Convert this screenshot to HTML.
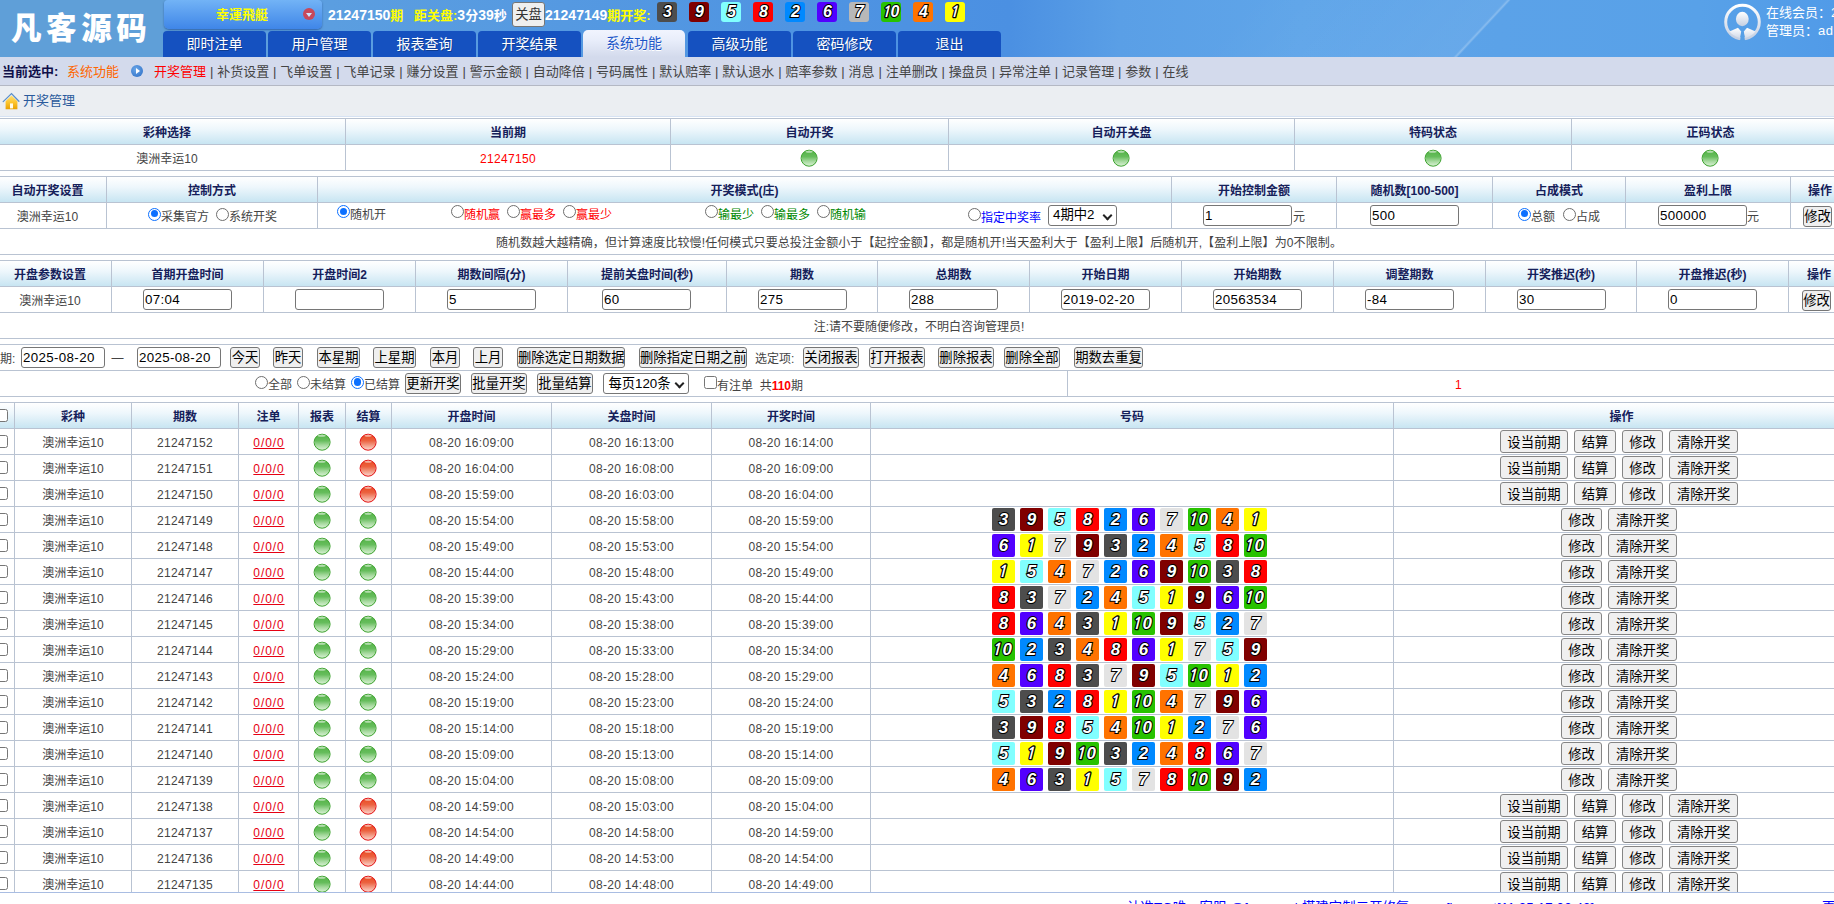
<!DOCTYPE html><html lang="zh"><head><meta charset="utf-8"><title>开奖管理</title><style>
*{box-sizing:border-box}
html,body{margin:0;padding:0}
body{width:1834px;height:904px;overflow:hidden;position:relative;background:#fff;
 font-family:"Liberation Sans","Noto Sans CJK SC",sans-serif;font-size:12px;color:#333;}
#hd{position:absolute;left:0;top:0;width:1834px;height:57px;overflow:hidden;
 background:linear-gradient(90deg,#5f9fd8 0,#5f9fd8 160px,#5b9ee0 330px,#4f94e2 800px,#4b90e2 1010px,#5a9fe6 1120px,#5fa5e9 1300px,#5ba2e8 1500px,#58a1e8 1700px,#519be8 1834px);}
#hd .streak{position:absolute;left:1214px;top:-40px;width:260px;height:160px;transform:skewX(-43deg);
 background:linear-gradient(90deg,rgba(255,255,255,0) 0,rgba(255,255,255,.07) 98%,rgba(255,255,255,.28) 99%,rgba(255,255,255,0) 100%);}
#logo{position:absolute;left:11px;top:6px;font-size:30.5px;line-height:44px;font-weight:900;color:#fff;letter-spacing:4.6px;white-space:nowrap}
#game{position:absolute;left:164px;top:0;width:158px;height:29px;border-radius:4px 4px 5px 5px;
 background:linear-gradient(#72b3f6,#3f86e8);box-shadow:0 1px 2px rgba(0,40,120,.5);color:#ffff00;font-weight:bold;font-size:13px;line-height:29px}
#game span{position:absolute;left:52px;top:0;white-space:nowrap}
#game i{position:absolute;left:139px;top:8px;width:12px;height:12px;border-radius:50%;background:#c8485a}
#game i:after{content:"";position:absolute;left:3px;top:4.5px;border:3px solid transparent;border-top:4px solid #cfe4ff;border-bottom:0}
.inf{position:absolute;top:1px;height:29px;line-height:28px;font-size:13px;font-weight:bold;color:#fff;white-space:nowrap}
.inf .dg{font-size:14px}
.inf .y{color:#ffff00}
#gp{position:absolute;left:512px;top:2px;font-family:inherit;font-weight:normal;font-size:13.33px;padding:0 0 1px 0;height:24.5px;width:33px;margin:0;border:1px solid #767676;border-radius:3px;background:#efefef;color:#333}
.n10 .k{left:-4px}
.hb .k{font-size:15.3px}
.hb{position:absolute;top:2px;width:20px;height:20px;border-radius:3px;text-align:center;line-height:20px;font:italic bold 16px/20px "Liberation Sans",sans-serif;color:#fff;
 -webkit-text-stroke:2px #000;paint-order:stroke fill;letter-spacing:-1px}
.tab{position:absolute;top:31px;width:103px;height:26px;border-radius:4px 4px 0 0;background:#1551c0;color:#fff;font-size:14px;line-height:26px;text-align:center;text-shadow:1px 1px 0 rgba(0,0,0,.25)}
.tab.on{top:30px;height:27px;width:102px;background:linear-gradient(#f1f4fe 0,#e8edfa 40%,#d3daec 100%);color:#1a55c8;line-height:27px;text-shadow:0 1px 0 #fff;border-radius:5px 5px 0 0}
#user{position:absolute;left:1766px;top:4px;color:#fff;font-size:13px;line-height:18px;white-space:nowrap}
#sub{position:absolute;left:0;top:57px;width:1834px;height:29px;background:#d3daec;border-bottom:1px solid #b4b8c4;line-height:27px;font-size:13px;color:#444;white-space:nowrap}
#sub b{color:#10104a;position:absolute;left:2px;top:1px}
#sub .o{color:#ff6600;position:absolute;left:67px;top:1px}
#sub .r{color:#f00}
#sub .lk{position:absolute;left:154px;word-spacing:0.27px;top:1px}
#sub .pl{position:absolute;left:131px;top:8px;width:12px;height:12px;border-radius:50%;background:radial-gradient(circle at 40% 35%,#6aa6e8,#2a6cc4)}
#sub .pl:after{content:"";position:absolute;left:4.5px;top:3px;border:3px solid transparent;border-left:4px solid #fff;border-right:0}
#ttl{position:absolute;left:0;top:86px;width:1834px;height:31px;background:#ebeef2;border-bottom:1px solid #d6e2f3;font-size:13px;color:#2a5a9c;line-height:30px}
#ttl span{position:absolute;left:23px}
table{border-collapse:separate;border-spacing:0;table-layout:fixed;position:absolute;border-top:1px solid #b9c3d2;border-left:1px solid #b9c3d2}
td,th{border-right:1px solid #b9c3d2;border-bottom:1px solid #b9c3d2;height:26px;padding:3px 0 0 0;text-align:center;font-size:12px;font-weight:normal;white-space:nowrap;overflow:hidden;color:#444;vertical-align:top;line-height:22px}
th{font-weight:bold;color:#15205a;background:linear-gradient(#ffffff 0,#eef7fc 40%,#c8e5f2 100%)}
input.t{display:block;font-family:inherit;font-size:13.33px;width:89px;height:21px;border:1px solid #767676;border-radius:3px;padding:0 0 0 1px;margin:0;color:#000;background:#fff;letter-spacing:.35px}
button.b{display:block;font-family:inherit;font-size:13.33px;height:20.6px;border:1px solid #767676;border-radius:3px;background:#efefef;color:#000;padding:1px 0 0 0;margin:0;vertical-align:middle;line-height:17px}
button.c{font-family:inherit;font-size:13.33px;height:22.7px;border:1px solid #858585;border-radius:3px;background:#f0f0f0;color:#000;padding:1.5px 0 0 0;margin:0 6px 0 0;vertical-align:middle;line-height:19px;position:relative;top:0.4px;left:-0.5px}
button.c:last-child{margin-right:3.8px}
.a{position:absolute;white-space:nowrap;line-height:16px;font-size:12px;color:#444}
.a.tx{line-height:18px}
.rg .lb{position:absolute;left:13px;top:0.5px;line-height:18px}
.rg .rd,.rg .ck{position:absolute;left:0;top:0}
td.m,th.m{padding:0;line-height:25px;vertical-align:middle;font-size:0}
td.d{letter-spacing:.3px}
button.sd{width:68px}button.js{width:42px}button.xg{width:41px}button.qc{width:69.2px}
.rd{display:inline-block;width:13px;height:13px;border-radius:50%;border:1.2px solid #6e6e6e;background:#fff;vertical-align:middle;position:relative}
.rd.on{border:1.3px solid #0c70ff}
.rd.on:after{content:"";position:absolute;left:1.5px;top:1.5px;width:7.4px;height:7.4px;border-radius:50%;background:#0c70ff}
.ck{display:inline-block;width:13px;height:13px;border-radius:2.5px;border:1px solid #767676;background:#fff;vertical-align:middle;position:relative;top:.5px}
.sel{display:block;height:21px;border:1px solid #767676;border-radius:3px;background:#fff;color:#000;font-size:13.33px;line-height:19px;text-align:left;padding-left:4px;vertical-align:middle;position:relative}
.sel:after{content:"";position:absolute;right:5px;top:6px;width:5px;height:5px;border-right:2px solid #222;border-bottom:2px solid #222;transform:rotate(45deg)}
.g,.r2{display:inline-block;width:17px;height:17px;border-radius:50%;vertical-align:middle;position:relative;transform:translate(-0.4px,0.7px)}
.g{background:linear-gradient(#55b348 0,#66bd5c 40%,#a5d99d 70%,#d6f0d1 100%);border:1.6px solid #3aa22b}
.r2{background:linear-gradient(#e84a22 0,#ec6240 40%,#f39a84 70%,#fbd3c9 100%);border:1.6px solid #e30d0d}
.g:after,.r2:after{content:"";position:absolute;left:3.5px;top:0.3px;width:7.5px;height:2px;border-radius:50%;background:rgba(255,255,255,.55)}
.n{display:inline-block;width:23px;height:23px;margin-right:5px;border-radius:2px;text-align:center;font:italic bold 17px/23px "Liberation Sans",sans-serif;color:#fff;vertical-align:middle;letter-spacing:-1px;text-indent:-1px;position:relative;top:.5px;
 -webkit-text-stroke:2px #000;paint-order:stroke fill}
.k{font-family:"NanumGothic","Liberation Sans",sans-serif;font-weight:bold;font-size:16.3px;-webkit-text-stroke:2.6px #000;position:relative;left:-2.4px;margin-right:-1.6px}
.n1{background:#ffff00}.n2{background:#0089ff}.n3{background:#4d4d4d}.n4{background:#ff7300}.n5{background:#81ffff}
.n6{background:#5200ff}.n7{background:#e3e3e3}.n8{background:#ff0000}.n9{background:#800000}.n10{background:#28c200}
a.u{color:#e60012;text-decoration:underline;letter-spacing:.9px;margin-left:.9px}
.red{color:#f00}.grn{color:#080}.blu{color:#00f}
#ft{position:absolute;left:0;top:892px;width:1834px;height:12px;background:#fff;border-top:1px solid #a9bde2;overflow:hidden}
#ft span{position:absolute;top:7px;font-size:13.33px;letter-spacing:.12px;color:#0000ff;white-space:nowrap;line-height:16px}
</style></head><body>
<div id="hd"><div class="streak"></div>
<div id="logo">凡客源码</div>
<div id="game"><span>幸運飛艇</span><i></i></div>
<div class="inf" style="left:328px"><span class="dg">21247150</span><span class="y">期</span></div>
<div class="inf" style="left:414px"><span class="y">距关盘:</span><span class="dg">3</span>分<span class="dg">39</span>秒</div>
<button id="gp">关盘</button>
<div class="inf" style="left:545px"><span class="dg">21247149</span><span class="y">期开奖:</span></div>
<div class="hb" style="left:657px;background:#4d4d4d">3</div>
<div class="hb" style="left:689px;background:#800000">9</div>
<div class="hb" style="left:721px;background:#81ffff">5</div>
<div class="hb" style="left:753px;background:#ff0000">8</div>
<div class="hb" style="left:785px;background:#0089ff">2</div>
<div class="hb" style="left:817px;background:#5200ff">6</div>
<div class="hb" style="left:849px;background:#b8b8b8">7</div>
<div class="hb" style="left:881px;background:#28c200"><span class=k>1</span>0</div>
<div class="hb" style="left:913px;background:#ff7300">4</div>
<div class="hb" style="left:945px;background:#ffff00"><span class=k>1</span></div>
<div class="tab" style="left:163px">即时注单</div>
<div class="tab" style="left:268px">用户管理</div>
<div class="tab" style="left:373px">报表查询</div>
<div class="tab" style="left:478px">开奖结果</div>
<div class="tab on" style="left:583px">系统功能</div>
<div class="tab" style="left:688px">高级功能</div>
<div class="tab" style="left:793px">密码修改</div>
<div class="tab" style="left:898px">退出</div>
<svg style="position:absolute;left:1724px;top:3px" width="38" height="38" viewBox="0 0 38 38"><defs><linearGradient id="ug" x1="0" y1="0" x2="0" y2="1"><stop offset="0" stop-color="#fff"/><stop offset="1" stop-color="#c4cfe2"/></linearGradient><clipPath id="uc"><circle cx="18.5" cy="19" r="16"/></clipPath></defs><circle cx="18.5" cy="19" r="16.8" fill="none" stroke="url(#ug)" stroke-width="3"/><ellipse cx="18.3" cy="16" rx="6.4" ry="7.2" fill="url(#ug)"/><g clip-path="url(#uc)" fill="url(#ug)"><path d="M2 30 L14 24.8 L17.2 28.5 L15.6 38 L2 38Z"/><path d="M35 30 L23 24.8 L19.8 28.5 L21.4 38 L35 38Z"/></g><path d="M17.3 29 L19.7 29 L21 38 L16 38Z" fill="#569fe6"/></svg>
<div id="user">在线会员：2<br>管理员：<span style="letter-spacing:.6px">admin</span></div>
</div>
<div id="sub"><b>当前选中:</b><span class="o">系统功能</span><span class="pl"></span><span class="lk"><span class="r">开奖管理</span> | 补货设置 | 飞单设置 | 飞单记录 | 赚分设置 | 警示金额 | 自动降倍 | 号码属性 | 默认赔率 | 默认退水 | 赔率参数 | 消息 | 注单删改 | 操盘员 | 异常注单 | 记录管理 | 参数 | 在线</span></div>
<div id="ttl"><svg style="position:absolute;left:2px;top:6px" width="18" height="18" viewBox="0 0 18 18"><defs><linearGradient id="hg" x1="0" y1="0" x2="0" y2="1"><stop offset="0" stop-color="#ffe27a"/><stop offset="0.5" stop-color="#fdc52e"/><stop offset="1" stop-color="#e9a100"/></linearGradient></defs><path d="M3.6 9.2 L9.5 3.4 L15.4 9.2 L15.4 17.2 L3.6 17.2Z" fill="url(#hg)"/><rect x="8" y="11.4" width="3" height="5" fill="#fffbe8"/><path d="M1.2 9.6 L9.5 1.6 L16.9 9.2" fill="none" stroke="#5b8fc9" stroke-width="1.3" stroke-linecap="round" stroke-linejoin="miter"/></svg><span>开奖管理</span></div>
<table style="left:-12px;top:118px;width:1862px" ><colgroup><col style="width:357px"><col style="width:325px"><col style="width:278px"><col style="width:346px"><col style="width:277px"><col style="width:278px"></colgroup><tr><th>彩种选择</th><th>当前期</th><th>自动开奖</th><th>自动开关盘</th><th>特码状态</th><th>正码状态</th></tr><tr><td>澳洲幸运10</td><td class="red d">21247150</td><td class="m"><span class="g"></span></td><td class="m"><span class="g"></span></td><td class="m"><span class="g"></span></td><td class="m"><span class="g"></span></td></tr></table>
<table style="left:-12px;top:176px;width:1862px" ><colgroup><col style="width:118px"><col style="width:211px"><col style="width:854px"><col style="width:165px"><col style="width:156px"><col style="width:133px"><col style="width:165px"><col style="width:59px"></colgroup><tr><th>自动开奖设置</th><th>控制方式</th><th>开奖模式(庄)</th><th>开始控制金额</th><th>随机数[100-500]</th><th>占成模式</th><th>盈利上限</th><th>操作</th></tr><tr><td>澳洲幸运10</td><td></td><td></td><td></td><td></td><td></td><td></td><td></td></tr><tr><td colspan="8" style="letter-spacing:.1px">随机数越大越精确，但计算速度比较慢!任何模式只要总投注金额小于【起控金额】，都是随机开!当天盈利大于【盈利上限】后随机开,【盈利上限】为0不限制。</td></tr></table>
<table style="left:-12px;top:260px;width:1862px" ><colgroup><col style="width:123px"><col style="width:152px"><col style="width:152px"><col style="width:152px"><col style="width:159px"><col style="width:151px"><col style="width:152px"><col style="width:152px"><col style="width:152px"><col style="width:152px"><col style="width:151px"><col style="width:152px"><col style="width:61px"></colgroup><tr><th>开盘参数设置</th><th>首期开盘时间</th><th>开盘时间2</th><th>期数间隔(分)</th><th>提前关盘时间(秒)</th><th>期数</th><th>总期数</th><th>开始日期</th><th>开始期数</th><th>调整期数</th><th>开奖推迟(秒)</th><th>开盘推迟(秒)</th><th>操作</th></tr><tr><td>澳洲幸运10</td><td></td><td></td><td></td><td></td><td></td><td></td><td></td><td></td><td></td><td></td><td></td><td></td></tr><tr><td colspan="13">注:请不要随便修改，不明白咨询管理员!</td></tr></table>
<table style="left:-12px;top:344px;width:1862px" ><colgroup><col style="width:1079px"><col style="width:782px"></colgroup><tr><td colspan="2"></td></tr><tr><td></td><td class="red d">1</td></tr></table>
<table style="left:-12px;top:402px;width:1862px" ><colgroup><col style="width:26px"><col style="width:117px"><col style="width:107px"><col style="width:60px"><col style="width:47px"><col style="width:46px"><col style="width:160px"><col style="width:160px"><col style="width:159px"><col style="width:523px"><col style="width:456px"></colgroup><tr><th class="m"><span class="ck"></span></th><th>彩种</th><th>期数</th><th>注单</th><th>报表</th><th>结算</th><th>开盘时间</th><th>关盘时间</th><th>开奖时间</th><th>号码</th><th>操作</th></tr><tr><td class="m"><span class="ck"></span></td><td>澳洲幸运10</td><td class="d">21247152</td><td><a class="u">0/0/0</a></td><td class="m"><span class="g"></span></td><td class="m"><span class="r2"></span></td><td class="d">08-20 16:09:00</td><td class="d">08-20 16:13:00</td><td class="d">08-20 16:14:00</td><td class="m"></td><td class="m"><button class="c sd">设当前期</button><button class="c js">结算</button><button class="c xg">修改</button><button class="c qc">清除开奖</button></td></tr><tr><td class="m"><span class="ck"></span></td><td>澳洲幸运10</td><td class="d">21247151</td><td><a class="u">0/0/0</a></td><td class="m"><span class="g"></span></td><td class="m"><span class="r2"></span></td><td class="d">08-20 16:04:00</td><td class="d">08-20 16:08:00</td><td class="d">08-20 16:09:00</td><td class="m"></td><td class="m"><button class="c sd">设当前期</button><button class="c js">结算</button><button class="c xg">修改</button><button class="c qc">清除开奖</button></td></tr><tr><td class="m"><span class="ck"></span></td><td>澳洲幸运10</td><td class="d">21247150</td><td><a class="u">0/0/0</a></td><td class="m"><span class="g"></span></td><td class="m"><span class="r2"></span></td><td class="d">08-20 15:59:00</td><td class="d">08-20 16:03:00</td><td class="d">08-20 16:04:00</td><td class="m"></td><td class="m"><button class="c sd">设当前期</button><button class="c js">结算</button><button class="c xg">修改</button><button class="c qc">清除开奖</button></td></tr><tr><td class="m"><span class="ck"></span></td><td>澳洲幸运10</td><td class="d">21247149</td><td><a class="u">0/0/0</a></td><td class="m"><span class="g"></span></td><td class="m"><span class="g"></span></td><td class="d">08-20 15:54:00</td><td class="d">08-20 15:58:00</td><td class="d">08-20 15:59:00</td><td class="m"><span class="n n3">3</span><span class="n n9">9</span><span class="n n5">5</span><span class="n n8">8</span><span class="n n2">2</span><span class="n n6">6</span><span class="n n7">7</span><span class="n n10"><span class=k>1</span>0</span><span class="n n4">4</span><span class="n n1"><span class=k>1</span></span></td><td class="m"><button class="c xg">修改</button><button class="c qc">清除开奖</button></td></tr><tr><td class="m"><span class="ck"></span></td><td>澳洲幸运10</td><td class="d">21247148</td><td><a class="u">0/0/0</a></td><td class="m"><span class="g"></span></td><td class="m"><span class="g"></span></td><td class="d">08-20 15:49:00</td><td class="d">08-20 15:53:00</td><td class="d">08-20 15:54:00</td><td class="m"><span class="n n6">6</span><span class="n n1"><span class=k>1</span></span><span class="n n7">7</span><span class="n n9">9</span><span class="n n3">3</span><span class="n n2">2</span><span class="n n4">4</span><span class="n n5">5</span><span class="n n8">8</span><span class="n n10"><span class=k>1</span>0</span></td><td class="m"><button class="c xg">修改</button><button class="c qc">清除开奖</button></td></tr><tr><td class="m"><span class="ck"></span></td><td>澳洲幸运10</td><td class="d">21247147</td><td><a class="u">0/0/0</a></td><td class="m"><span class="g"></span></td><td class="m"><span class="g"></span></td><td class="d">08-20 15:44:00</td><td class="d">08-20 15:48:00</td><td class="d">08-20 15:49:00</td><td class="m"><span class="n n1"><span class=k>1</span></span><span class="n n5">5</span><span class="n n4">4</span><span class="n n7">7</span><span class="n n2">2</span><span class="n n6">6</span><span class="n n9">9</span><span class="n n10"><span class=k>1</span>0</span><span class="n n3">3</span><span class="n n8">8</span></td><td class="m"><button class="c xg">修改</button><button class="c qc">清除开奖</button></td></tr><tr><td class="m"><span class="ck"></span></td><td>澳洲幸运10</td><td class="d">21247146</td><td><a class="u">0/0/0</a></td><td class="m"><span class="g"></span></td><td class="m"><span class="g"></span></td><td class="d">08-20 15:39:00</td><td class="d">08-20 15:43:00</td><td class="d">08-20 15:44:00</td><td class="m"><span class="n n8">8</span><span class="n n3">3</span><span class="n n7">7</span><span class="n n2">2</span><span class="n n4">4</span><span class="n n5">5</span><span class="n n1"><span class=k>1</span></span><span class="n n9">9</span><span class="n n6">6</span><span class="n n10"><span class=k>1</span>0</span></td><td class="m"><button class="c xg">修改</button><button class="c qc">清除开奖</button></td></tr><tr><td class="m"><span class="ck"></span></td><td>澳洲幸运10</td><td class="d">21247145</td><td><a class="u">0/0/0</a></td><td class="m"><span class="g"></span></td><td class="m"><span class="g"></span></td><td class="d">08-20 15:34:00</td><td class="d">08-20 15:38:00</td><td class="d">08-20 15:39:00</td><td class="m"><span class="n n8">8</span><span class="n n6">6</span><span class="n n4">4</span><span class="n n3">3</span><span class="n n1"><span class=k>1</span></span><span class="n n10"><span class=k>1</span>0</span><span class="n n9">9</span><span class="n n5">5</span><span class="n n2">2</span><span class="n n7">7</span></td><td class="m"><button class="c xg">修改</button><button class="c qc">清除开奖</button></td></tr><tr><td class="m"><span class="ck"></span></td><td>澳洲幸运10</td><td class="d">21247144</td><td><a class="u">0/0/0</a></td><td class="m"><span class="g"></span></td><td class="m"><span class="g"></span></td><td class="d">08-20 15:29:00</td><td class="d">08-20 15:33:00</td><td class="d">08-20 15:34:00</td><td class="m"><span class="n n10"><span class=k>1</span>0</span><span class="n n2">2</span><span class="n n3">3</span><span class="n n4">4</span><span class="n n8">8</span><span class="n n6">6</span><span class="n n1"><span class=k>1</span></span><span class="n n7">7</span><span class="n n5">5</span><span class="n n9">9</span></td><td class="m"><button class="c xg">修改</button><button class="c qc">清除开奖</button></td></tr><tr><td class="m"><span class="ck"></span></td><td>澳洲幸运10</td><td class="d">21247143</td><td><a class="u">0/0/0</a></td><td class="m"><span class="g"></span></td><td class="m"><span class="g"></span></td><td class="d">08-20 15:24:00</td><td class="d">08-20 15:28:00</td><td class="d">08-20 15:29:00</td><td class="m"><span class="n n4">4</span><span class="n n6">6</span><span class="n n8">8</span><span class="n n3">3</span><span class="n n7">7</span><span class="n n9">9</span><span class="n n5">5</span><span class="n n10"><span class=k>1</span>0</span><span class="n n1"><span class=k>1</span></span><span class="n n2">2</span></td><td class="m"><button class="c xg">修改</button><button class="c qc">清除开奖</button></td></tr><tr><td class="m"><span class="ck"></span></td><td>澳洲幸运10</td><td class="d">21247142</td><td><a class="u">0/0/0</a></td><td class="m"><span class="g"></span></td><td class="m"><span class="g"></span></td><td class="d">08-20 15:19:00</td><td class="d">08-20 15:23:00</td><td class="d">08-20 15:24:00</td><td class="m"><span class="n n5">5</span><span class="n n3">3</span><span class="n n2">2</span><span class="n n8">8</span><span class="n n1"><span class=k>1</span></span><span class="n n10"><span class=k>1</span>0</span><span class="n n4">4</span><span class="n n7">7</span><span class="n n9">9</span><span class="n n6">6</span></td><td class="m"><button class="c xg">修改</button><button class="c qc">清除开奖</button></td></tr><tr><td class="m"><span class="ck"></span></td><td>澳洲幸运10</td><td class="d">21247141</td><td><a class="u">0/0/0</a></td><td class="m"><span class="g"></span></td><td class="m"><span class="g"></span></td><td class="d">08-20 15:14:00</td><td class="d">08-20 15:18:00</td><td class="d">08-20 15:19:00</td><td class="m"><span class="n n3">3</span><span class="n n9">9</span><span class="n n8">8</span><span class="n n5">5</span><span class="n n4">4</span><span class="n n10"><span class=k>1</span>0</span><span class="n n1"><span class=k>1</span></span><span class="n n2">2</span><span class="n n7">7</span><span class="n n6">6</span></td><td class="m"><button class="c xg">修改</button><button class="c qc">清除开奖</button></td></tr><tr><td class="m"><span class="ck"></span></td><td>澳洲幸运10</td><td class="d">21247140</td><td><a class="u">0/0/0</a></td><td class="m"><span class="g"></span></td><td class="m"><span class="g"></span></td><td class="d">08-20 15:09:00</td><td class="d">08-20 15:13:00</td><td class="d">08-20 15:14:00</td><td class="m"><span class="n n5">5</span><span class="n n1"><span class=k>1</span></span><span class="n n9">9</span><span class="n n10"><span class=k>1</span>0</span><span class="n n3">3</span><span class="n n2">2</span><span class="n n4">4</span><span class="n n8">8</span><span class="n n6">6</span><span class="n n7">7</span></td><td class="m"><button class="c xg">修改</button><button class="c qc">清除开奖</button></td></tr><tr><td class="m"><span class="ck"></span></td><td>澳洲幸运10</td><td class="d">21247139</td><td><a class="u">0/0/0</a></td><td class="m"><span class="g"></span></td><td class="m"><span class="g"></span></td><td class="d">08-20 15:04:00</td><td class="d">08-20 15:08:00</td><td class="d">08-20 15:09:00</td><td class="m"><span class="n n4">4</span><span class="n n6">6</span><span class="n n3">3</span><span class="n n1"><span class=k>1</span></span><span class="n n5">5</span><span class="n n7">7</span><span class="n n8">8</span><span class="n n10"><span class=k>1</span>0</span><span class="n n9">9</span><span class="n n2">2</span></td><td class="m"><button class="c xg">修改</button><button class="c qc">清除开奖</button></td></tr><tr><td class="m"><span class="ck"></span></td><td>澳洲幸运10</td><td class="d">21247138</td><td><a class="u">0/0/0</a></td><td class="m"><span class="g"></span></td><td class="m"><span class="r2"></span></td><td class="d">08-20 14:59:00</td><td class="d">08-20 15:03:00</td><td class="d">08-20 15:04:00</td><td class="m"></td><td class="m"><button class="c sd">设当前期</button><button class="c js">结算</button><button class="c xg">修改</button><button class="c qc">清除开奖</button></td></tr><tr><td class="m"><span class="ck"></span></td><td>澳洲幸运10</td><td class="d">21247137</td><td><a class="u">0/0/0</a></td><td class="m"><span class="g"></span></td><td class="m"><span class="r2"></span></td><td class="d">08-20 14:54:00</td><td class="d">08-20 14:58:00</td><td class="d">08-20 14:59:00</td><td class="m"></td><td class="m"><button class="c sd">设当前期</button><button class="c js">结算</button><button class="c xg">修改</button><button class="c qc">清除开奖</button></td></tr><tr><td class="m"><span class="ck"></span></td><td>澳洲幸运10</td><td class="d">21247136</td><td><a class="u">0/0/0</a></td><td class="m"><span class="g"></span></td><td class="m"><span class="r2"></span></td><td class="d">08-20 14:49:00</td><td class="d">08-20 14:53:00</td><td class="d">08-20 14:54:00</td><td class="m"></td><td class="m"><button class="c sd">设当前期</button><button class="c js">结算</button><button class="c xg">修改</button><button class="c qc">清除开奖</button></td></tr><tr><td class="m"><span class="ck"></span></td><td>澳洲幸运10</td><td class="d">21247135</td><td><a class="u">0/0/0</a></td><td class="m"><span class="g"></span></td><td class="m"><span class="r2"></span></td><td class="d">08-20 14:44:00</td><td class="d">08-20 14:48:00</td><td class="d">08-20 14:49:00</td><td class="m"></td><td class="m"><button class="c sd">设当前期</button><button class="c js">结算</button><button class="c xg">修改</button><button class="c qc">清除开奖</button></td></tr></table>
<div class="a rg" style="left:148px;top:207.5px;"><span class="rd on"></span><span class="lb ">采集官方</span></div>
<div class="a rg" style="left:216px;top:207.5px;"><span class="rd"></span><span class="lb ">系统开奖</span></div>
<div class="a rg" style="left:337px;top:205px;"><span class="rd on"></span><span class="lb ">随机开</span></div>
<div class="a rg" style="left:451px;top:205px;"><span class="rd"></span><span class="lb red">随机赢</span></div>
<div class="a rg" style="left:507px;top:205px;"><span class="rd"></span><span class="lb red">赢最多</span></div>
<div class="a rg" style="left:563px;top:205px;"><span class="rd"></span><span class="lb red">赢最少</span></div>
<div class="a rg" style="left:705px;top:205px;"><span class="rd"></span><span class="lb grn">输最少</span></div>
<div class="a rg" style="left:761px;top:205px;"><span class="rd"></span><span class="lb grn">输最多</span></div>
<div class="a rg" style="left:817px;top:205px;"><span class="rd"></span><span class="lb grn">随机输</span></div>
<div class="a rg" style="left:968px;top:208px;"><span class="rd"></span><span class="lb blu">指定中奖率</span></div>
<div class="a " style="left:1048px;top:205.4px;"><span class="sel" style="width:69.3px;height:20.3px;line-height:18px">4期中2</span></div>
<div class="a " style="left:1203px;top:205px;"><input class="t" style="width:89px" value="1"></div>
<div class="a tx" style="left:1293px;top:208px;">元</div>
<div class="a " style="left:1370px;top:205px;"><input class="t" style="width:89px" value="500"></div>
<div class="a rg" style="left:1518px;top:207.5px;"><span class="rd on"></span><span class="lb ">总额</span></div>
<div class="a rg" style="left:1563px;top:207.5px;"><span class="rd"></span><span class="lb ">占成</span></div>
<div class="a " style="left:1658px;top:205px;"><input class="t" style="width:89px" value="500000"></div>
<div class="a tx" style="left:1747px;top:208px;">元</div>
<div class="a " style="left:1803px;top:206px;"><button class="b" style="width:29px">修改</button></div>
<div class="a " style="left:143px;top:289px;"><input class="t" style="width:89px" value="07:04"></div>
<div class="a " style="left:295px;top:289px;"><input class="t" style="width:89px" value=""></div>
<div class="a " style="left:447px;top:289px;"><input class="t" style="width:89px" value="5"></div>
<div class="a " style="left:602px;top:289px;"><input class="t" style="width:89px" value="60"></div>
<div class="a " style="left:758px;top:289px;"><input class="t" style="width:89px" value="275"></div>
<div class="a " style="left:909px;top:289px;"><input class="t" style="width:89px" value="288"></div>
<div class="a " style="left:1061px;top:289px;"><input class="t" style="width:89px" value="2019-02-20"></div>
<div class="a " style="left:1213px;top:289px;"><input class="t" style="width:89px" value="20563534"></div>
<div class="a " style="left:1365px;top:289px;"><input class="t" style="width:89px" value="-84"></div>
<div class="a " style="left:1517px;top:289px;"><input class="t" style="width:89px" value="30"></div>
<div class="a " style="left:1668px;top:289px;"><input class="t" style="width:89px" value="0"></div>
<div class="a " style="left:1802px;top:290px;"><button class="b" style="width:29px">修改</button></div>
<div class="a tx" style="left:-12px;top:349.5px;">日期:</div>
<div class="a " style="left:21px;top:347px;"><input class="t" style="width:84px" value="2025-08-20"></div>
<div class="a tx" style="left:111.5px;top:349px;">—</div>
<div class="a " style="left:137px;top:347px;"><input class="t" style="width:84px" value="2025-08-20"></div>
<div class="a " style="left:230px;top:347px;"><button class="b" style="width:30px">今天</button></div>
<div class="a " style="left:273px;top:347px;"><button class="b" style="width:30px">昨天</button></div>
<div class="a " style="left:317px;top:347px;"><button class="b" style="width:43px">本星期</button></div>
<div class="a " style="left:373px;top:347px;"><button class="b" style="width:43px">上星期</button></div>
<div class="a " style="left:430px;top:347px;"><button class="b" style="width:30px">本月</button></div>
<div class="a " style="left:473px;top:347px;"><button class="b" style="width:30px">上月</button></div>
<div class="a " style="left:517px;top:347px;"><button class="b" style="width:108px">删除选定日期数据</button></div>
<div class="a " style="left:639px;top:347px;"><button class="b" style="width:108px">删除指定日期之前</button></div>
<div class="a tx" style="left:755px;top:349.5px;">选定项:</div>
<div class="a " style="left:803px;top:347px;"><button class="b" style="width:56px">关闭报表</button></div>
<div class="a " style="left:869px;top:347px;"><button class="b" style="width:56px">打开报表</button></div>
<div class="a " style="left:938px;top:347px;"><button class="b" style="width:56px">删除报表</button></div>
<div class="a " style="left:1004px;top:347px;"><button class="b" style="width:56px">删除全部</button></div>
<div class="a " style="left:1074px;top:347px;"><button class="b" style="width:69px">期数去重复</button></div>
<div class="a rg" style="left:255px;top:375.7px;"><span class="rd"></span><span class="lb ">全部</span></div>
<div class="a rg" style="left:297px;top:375.7px;"><span class="rd"></span><span class="lb ">未结算</span></div>
<div class="a rg" style="left:351px;top:375.7px;"><span class="rd on"></span><span class="lb ">已结算</span></div>
<div class="a " style="left:405px;top:373px;"><button class="b" style="width:56px">更新开奖</button></div>
<div class="a " style="left:471px;top:373px;"><button class="b" style="width:56px">批量开奖</button></div>
<div class="a " style="left:537px;top:373px;"><button class="b" style="width:56px">批量结算</button></div>
<div class="a " style="left:603.4px;top:372.8px;"><span class="sel" style="width:85.6px;height:21px">每页120条</span></div>
<div class="a rg" style="left:704px;top:376.3px;"><span class="ck"></span><span class="lb">有注单&nbsp; 共<b class="red">110</b>期</span></div>
<div id="ft"><span style="left:1127px">认准TG唯一客服 @fancacs | 搭建定制二开修复 www.flase.net[11:35 17:02:43]</span><span style="left:1822px">更多</span></div>
</body></html>
